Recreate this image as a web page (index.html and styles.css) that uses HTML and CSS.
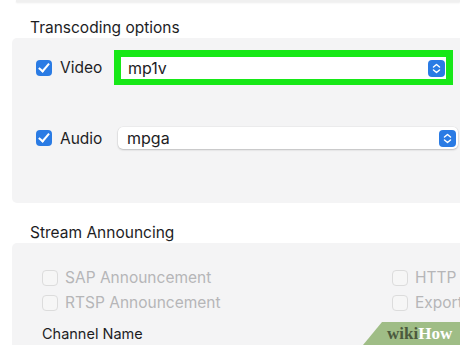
FILE: index.html
```html
<!DOCTYPE html>
<html lang="en">

<head>
    <meta charset="UTF-8">
    <meta name="viewport" content="width=device-width, initial-scale=1.0">
    <title>Stream Output</title>
    <link rel="stylesheet" href="styles.css">
</head>

<body>
    <div class="prev-panel"></div>

    <!-- Transcoding -->
    <div class="section-title">Transcoding options</div>
    <div class="panel transcode">
        <div class="row">
            <label class="check on"><span class="box"></span>Video</label>
            <div class="highlight">
                <div class="select">
                    <span>mp1v</span>
                    <span class="stepper"><svg width="9" height="11" viewBox="0 0 9 11"><path d="M1.5 4 L4.5 1.5 L7.5 4 M1.5 7 L4.5 9.5 L7.5 7" fill="none" stroke="#fff" stroke-width="1.5" stroke-linecap="round" stroke-linejoin="round"/></svg></span>
                </div>
            </div>
        </div>
        <div class="row audio">
            <label class="check on"><span class="box"></span>Audio</label>
            <div class="select plain">
                <span>mpga</span>
                <span class="stepper"><svg width="9" height="11" viewBox="0 0 9 11"><path d="M1.5 4 L4.5 1.5 L7.5 4 M1.5 7 L4.5 9.5 L7.5 7" fill="none" stroke="#fff" stroke-width="1.5" stroke-linecap="round" stroke-linejoin="round"/></svg></span>
            </div>
        </div>
    </div>

    <!-- Stream announcing -->
    <div class="section-title second">Stream Announcing</div>
    <div class="panel announce">
        <div class="grid">
            <div class="col">
                <label class="check off"><span class="box"></span>SAP Announcement</label>
                <label class="check off"><span class="box"></span>RTSP Announcement</label>
            </div>
            <div class="col right">
                <label class="check off"><span class="box"></span>HTTP</label>
                <label class="check off"><span class="box"></span>Export</label>
            </div>
        </div>
        <div class="channel">Channel Name</div>
    </div>

    <div class="wikihow"><span class="wiki">wiki</span><span class="how">How</span></div>
</body>

</html>
```

FILE: styles.css
```css
body {
    margin: 0;
    padding: 0;
    width: 460px;
    height: 345px;
    overflow: hidden;
    position: relative;
    background: #fff;
    font-family: 'Inter', 'Liberation Sans', sans-serif;
    color: #1d1d1f;
}

.prev-panel {
    margin-left: 16px;
    height: 2px;
    background: #f0f0f0;
    box-shadow: 0 1px 2px rgba(0, 0, 0, 0.08);
}

.section-title {
    padding: 16px 0 0 30px;
    height: 20px;
    font-size: 15.5px;
    line-height: 20px;
}

.section-title.second {
    padding-top: 20px;
}

.panel {
    margin-left: 12px;
    background: #f4f4f5;
    border-radius: 5px 0 0 5px;
}

.transcode {
    height: 165px;
    padding: 12px 0 0 24px;
    box-sizing: border-box;
}

.row {
    display: flex;
    align-items: center;
    height: 35px;
}

.row.audio {
    margin-top: 42px;
    height: 22px;
}

.check {
    display: flex;
    align-items: center;
    font-size: 15.5px;
    width: 78px;
}

.box {
    width: 16px;
    height: 16px;
    border-radius: 4px;
    margin-right: 8px;
    box-sizing: border-box;
    position: relative;
    flex-shrink: 0;
}

.check.on .box {
    background: #2a7be4;
}

.check.on .box::after {
    content: "";
    position: absolute;
    left: 5px;
    top: 1px;
    width: 4px;
    height: 9px;
    border: solid #fff;
    border-width: 0 2px 2px 0;
    transform: rotate(40deg);
}

.highlight {
    width: 339px;
    height: 35px;
    background: #17e817;
    padding: 7px 7px 6px 7px;
    box-sizing: border-box;
}

.select {
    display: flex;
    align-items: center;
    justify-content: space-between;
    height: 22px;
    background: #fff;
    font-size: 16px;
    padding-left: 7px;
    padding-right: 1px;
}

.select.plain {
    width: 329px;
    margin-left: 4px;
    height: 22px;
    border-radius: 5px;
    box-shadow: 0 1px 2px rgba(0, 0, 0, 0.2), 0 0 0 0.5px rgba(0, 0, 0, 0.06);
    padding-left: 9px;
    padding-right: 2px;
}

.stepper {
    width: 17px;
    height: 17px;
    border-radius: 4px;
    background: #2a7be4;
    display: flex;
    align-items: center;
    justify-content: center;
}

.announce {
    height: 110px;
    padding: 25px 0 0 30px;
    box-sizing: border-box;
    border-radius: 5px 0 0 0;
}

.grid {
    display: grid;
    grid-template-columns: 350px 80px;
}

.col {
    display: flex;
    flex-direction: column;
    gap: 6px;
}

.check.off {
    color: #b6b6b8;
    width: auto;
    font-size: 15.5px;
    white-space: nowrap;
}

.check.off .box {
    border: 1px solid #dcdcdc;
    background: #f6f6f6;
    margin-right: 7px;
}

.channel {
    margin-top: 13px;
    font-size: 14.5px;
}

.wikihow {
    position: absolute;
    right: 0;
    bottom: 0;
    width: 97px;
    height: 23px;
    background: #9fbd86;
    clip-path: polygon(19px 0, 100% 0, 100% 100%, 0 100%);
    font-family: 'Liberation Serif', 'DejaVu Serif', serif;
    font-weight: bold;
    font-size: 17px;
    line-height: 23px;
    padding-left: 24px;
    box-sizing: border-box;
    white-space: nowrap;
}

.wiki {
    color: #4b5a3e;
}

.how {
    color: #fff;
}
```
